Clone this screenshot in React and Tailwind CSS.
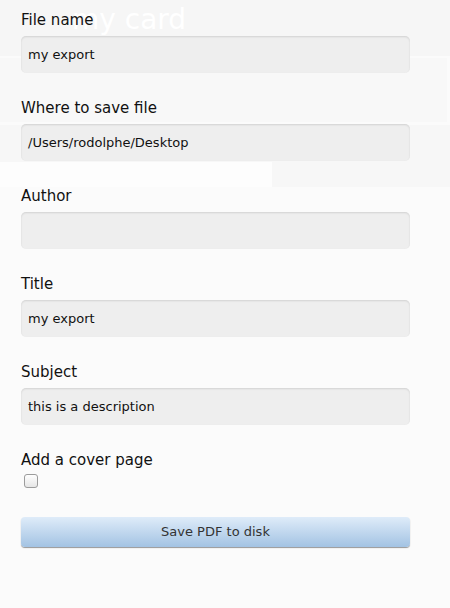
import { useState } from "react";

const Field = ({ label, value }) => (
  <div className="mb-[26px]">
    <p className="text-[15px] leading-[18px] text-[#111] mb-[7px]">{label}</p>
    <div className="h-[37px] rounded-[5px] bg-[#eeeeee] shadow-[inset_0_1px_2px_rgba(0,0,0,0.12)] flex items-center pl-[7px] text-[13px] text-[#111]">
      {value}
    </div>
  </div>
);

const App = () => {
  const [cover, setCover] = useState(false);

  return (
    <div
      className="relative w-[450px] h-[608px] overflow-hidden bg-[#fbfbfb]"
      style={{ fontFamily: '"DejaVu Sans", Verdana, sans-serif' }}
    >
      {/* ghost of the card behind */}
      <div className="absolute left-0 top-0 w-[450px] h-[56px] bg-[#f6f6f6]" />
      <div className="absolute left-0 top-[58px] w-[447px] h-[64px] bg-[#f8f8f8]" />
      <div className="absolute left-0 top-[125px] w-[450px] h-[62px] bg-[#f7f7f7]" />
      <div className="absolute left-0 top-[162px] w-[272px] h-[25px] bg-[#fdfdfd]" />
      <div className="absolute left-[72px] top-[2px] text-[28px] leading-[36px] text-white">
        my card
      </div>

      {/* FORM */}
      <div className="relative ml-[21px] w-[389px] pt-[11px]">
        <Field label="File name" value="my export" />
        <Field label="Where to save file" value="/Users/rodolphe/Desktop" />
        <Field label="Author" value="" />
        <Field label="Title" value="my export" />
        <Field label="Subject" value="this is a description" />

        <p className="text-[15px] leading-[18px] text-[#111]">Add a cover page</p>
        <div className="mt-[5px] ml-[3px] h-[13px] flex">
          <input
            type="checkbox"
            checked={cover}
            onChange={(e) => setCover(e.target.checked)}
            className="appearance-none w-[14px] h-[14px] rounded-[3px] border border-[#9c9c9c] bg-gradient-to-b from-white to-[#e6e6e6]"
          />
        </div>

        <button className="mt-[30px] w-full h-[30px] rounded-[4px] bg-gradient-to-b from-[#dfecf9] to-[#a3c3e3] shadow-[0_1px_1px_rgba(0,0,0,0.4)] text-[13px] text-[#333]">
          Save PDF to disk
        </button>
      </div>
    </div>
  );
};

export default App;
